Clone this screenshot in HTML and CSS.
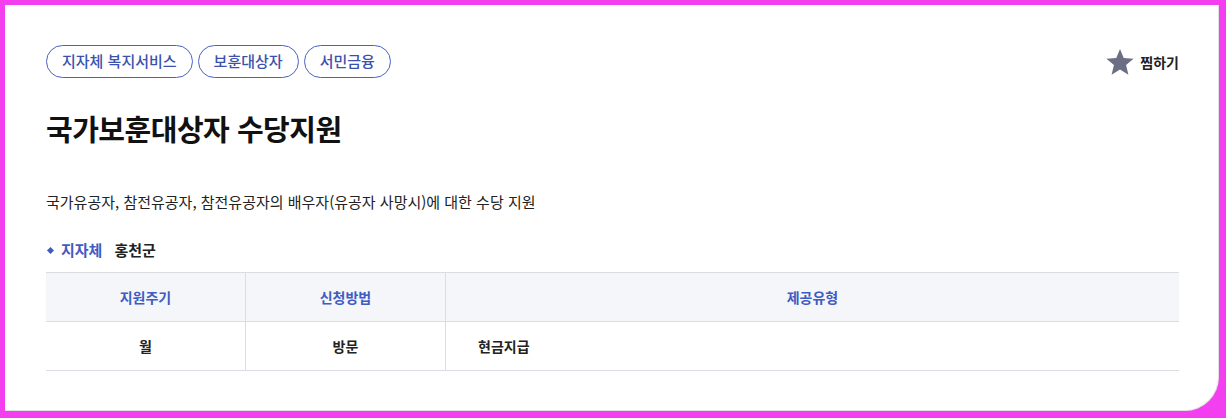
FILE: index.html
```html
<!DOCTYPE html>
<html lang="ko">
<head>
    <meta charset="UTF-8">
    <title>국가보훈대상자 수당지원</title>
    <link rel="stylesheet" href="styles.css">
</head>
<body>
    <div class="card">
        <div class="card-top">
            <ul class="tags">
                <li class="tag">지자체 복지서비스</li>
                <li class="tag">보훈대상자</li>
                <li class="tag">서민금융</li>
            </ul>
            <button class="like-button">
                <svg class="star" viewBox="0 0 24 24" width="28" height="28">
                    <path d="M12 .8l3.2 7.8 8.4.6-6.4 5.4 2 8.3L12 18.5l-7.2 4.4 2-8.3L.4 9.2l8.4-.6z" fill="#6c6e85"/>
                </svg>
                찜하기
            </button>
        </div>

        <h1 class="title">국가보훈대상자 수당지원</h1>
        <p class="desc">국가유공자, 참전유공자, 참전유공자의 배우자(유공자 사망시)에 대한 수당 지원</p>

        <div class="org">
            <span class="org-label">지자체</span>
            <span class="org-name">홍천군</span>
        </div>

        <table class="info-table">
            <thead>
                <tr>
                    <th class="col-cycle">지원주기</th>
                    <th class="col-method">신청방법</th>
                    <th>제공유형</th>
                </tr>
            </thead>
            <tbody>
                <tr>
                    <td>월</td>
                    <td>방문</td>
                    <td class="left">현금지급</td>
                </tr>
            </tbody>
        </table>
    </div>
</body>
</html>
```

FILE: styles.css
```css
html, body {
    height: 100%;
}

body {
    margin: 0;
    padding: 5px 7px 7px 5px;
    box-sizing: border-box;
    background-color: #f43ff0;
    font-family: 'Noto Sans CJK KR', 'Noto Sans', sans-serif;
    color: #222;
}

.card {
    background-color: #fff;
    height: 100%;
    box-sizing: border-box;
    padding: 40px 39px 0 41px;
    border-bottom-right-radius: 34px;
    border-right: 1px solid #e2e2e2;
    border-bottom: 1px solid #e2e2e2;
}

.card-top {
    display: flex;
    justify-content: space-between;
    align-items: center;
}

.tags {
    display: flex;
    gap: 5px;
    list-style: none;
    margin: 0;
    padding: 0;
}

.tag {
    border: 1px solid #4862c2;
    border-radius: 17px;
    height: 33px;
    box-sizing: border-box;
    padding: 0 15px;
    line-height: 30px;
    font-size: 15px;
    font-weight: 500;
    color: #3b52ad;
}

.like-button {
    display: flex;
    align-items: center;
    gap: 6px;
    background: none;
    border: none;
    padding: 0;
    font-family: inherit;
    font-size: 14px;
    font-weight: 700;
    color: #222;
    cursor: pointer;
}

.title {
    margin: 29px 0 0;
    font-size: 29px;
    font-weight: 700;
    line-height: 42px;
    color: #111;
    letter-spacing: -0.5px;
}

.desc {
    margin: 42px 0 0;
    font-size: 15px;
    line-height: 22px;
    color: #222;
}

.org {
    display: flex;
    align-items: center;
    margin-top: 26px;
    font-size: 15px;
    font-weight: 700;
    line-height: 22px;
}

.org-label {
    position: relative;
    padding-left: 15px;
    color: #3f5bc4;
}

.org-label::before {
    content: '';
    position: absolute;
    left: 2px;
    top: 9px;
    width: 5px;
    height: 5px;
    background-color: #3f5bc4;
    transform: rotate(45deg);
}

.org-name {
    margin-left: 12px;
    color: #222;
}

.info-table {
    width: 100%;
    margin-top: 11px;
    border-collapse: collapse;
    font-size: 14px;
}

.info-table th,
.info-table td {
    height: 48px;
    padding: 0;
    text-align: center;
    border-top: 1px solid #dcdde2;
    border-bottom: 1px solid #dcdde2;
}

.info-table th + th,
.info-table td + td {
    border-left: 1px solid #dcdde2;
}

.info-table th {
    background-color: #f4f6fa;
    color: #3f5bc4;
    font-weight: 700;
}

.info-table td {
    color: #222;
    font-weight: 700;
}

.info-table td.left {
    text-align: left;
    padding-left: 32px;
}

.col-cycle,
.col-method {
    width: 199px;
}
```
